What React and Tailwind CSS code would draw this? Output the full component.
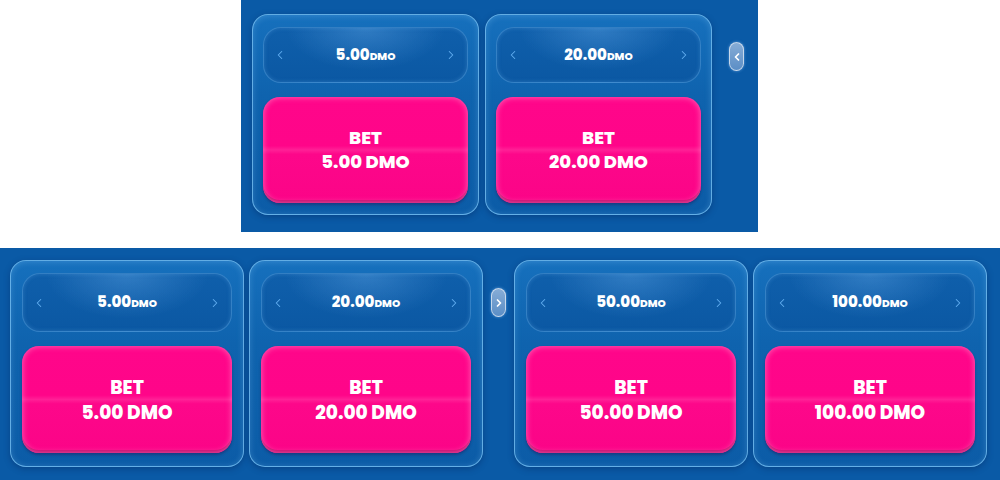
import React from 'react';
import { ChevronLeft, ChevronRight } from 'lucide-react';

const font = "font-['Poppins','Open_Sans','Noto_Sans',sans-serif]";

// one bet slot: amount stepper on top, big pink bet button below
const BetCard = ({ amount, size }) => {
  const big = size === 'lg';
  return (
    <div
      className={`flex flex-col shrink-0 rounded-[16px] border-[1.5px] border-[#72bbef]/85 bg-[linear-gradient(180deg,#1670bd_0%,#0f63ae_40%,#0c5ca7_100%)] shadow-[inset_0_1px_6px_rgba(150,210,255,0.25),0_2px_6px_rgba(0,30,80,0.35)] ${
        big ? 'w-[234px] h-[207px] px-[11px] pt-[12px] gap-[14px]' : 'w-[227px] h-[201px] px-[10px] pt-[12px] gap-[14px]'
      }`}
    >
      <div
        className={`flex items-center justify-between px-[9px] rounded-[18px] border border-[#4e9ad9]/60 bg-[radial-gradient(ellipse_at_50%_0%,rgba(90,160,225,0.45)_0%,rgba(20,95,170,0)_55%),linear-gradient(180deg,#0f5fab_0%,#0b58a3_100%)] shadow-[inset_0_0_4px_rgba(120,190,250,0.25)] ${
          big ? 'h-[59px]' : 'h-[56px]'
        }`}
      >
        <ChevronLeft size={14} strokeWidth={1.8} className="text-[#62aef0]" />
        <div className="flex items-baseline text-white font-extrabold">
          <span className={big ? 'text-[15px]' : 'text-[15px]'}>{amount}</span>
          <span className="text-[10.5px]">DMO</span>
        </div>
        <ChevronRight size={14} strokeWidth={1.8} className="text-[#62aef0]" />
      </div>
      <button
        className={`flex flex-col items-center justify-center rounded-[17px] text-white font-extrabold bg-[linear-gradient(180deg,#ff068a_0%,#ff0589_46%,#ff2096_50%,#fd078a_54%,#fb0487_100%)] shadow-[inset_0_0_6px_rgba(255,150,205,0.7),inset_0_-3px_0_#c4066a,0_2px_3px_rgba(40,0,60,0.35)] ${
          big ? 'h-[107px] text-[18.5px] leading-[25px]' : 'h-[106px] text-[18px] leading-[24px]'
        }`}
      >
        <span>BET</span>
        <span>{amount} DMO</span>
      </button>
    </div>
  );
};

const ScrollArrow = ({ dir }) => (
  <div className="flex items-center justify-center shrink-0 self-start mt-[28px] w-[15px] h-[29px] rounded-full border border-white/60 bg-[linear-gradient(180deg,#86acd6_0%,#5b8ec6_100%)] shadow-[0_0_3px_rgba(150,200,255,0.6)]">
    {dir === 'left' ? (
      <ChevronLeft size={12} strokeWidth={3.5} className="text-white" />
    ) : (
      <ChevronRight size={12} strokeWidth={3.5} className="text-white" />
    )}
  </div>
);

export default function App() {
  return (
    <div className={`w-[1000px] h-[480px] bg-white flex flex-col ${font}`}>
      <div className="ml-[241px] w-[517px] h-[232px] bg-[#0a5aa6] flex items-start pt-[14px] pl-[11px] gap-[6px]">
        <BetCard amount="5.00" />
        <BetCard amount="20.00" />
        <div className="ml-[11px] flex">
          <ScrollArrow dir="left" />
        </div>
      </div>
      <div className="mt-[16px] h-[232px] bg-[#0a5aa6] flex items-start pt-[12px] pl-[10px] gap-[5px]">
        <BetCard amount="5.00" size="lg" />
        <BetCard amount="20.00" size="lg" />
        <div className="mx-[3px] flex">
          <ScrollArrow dir="right" />
        </div>
        <BetCard amount="50.00" size="lg" />
        <BetCard amount="100.00" size="lg" />
      </div>
    </div>
  );
}
